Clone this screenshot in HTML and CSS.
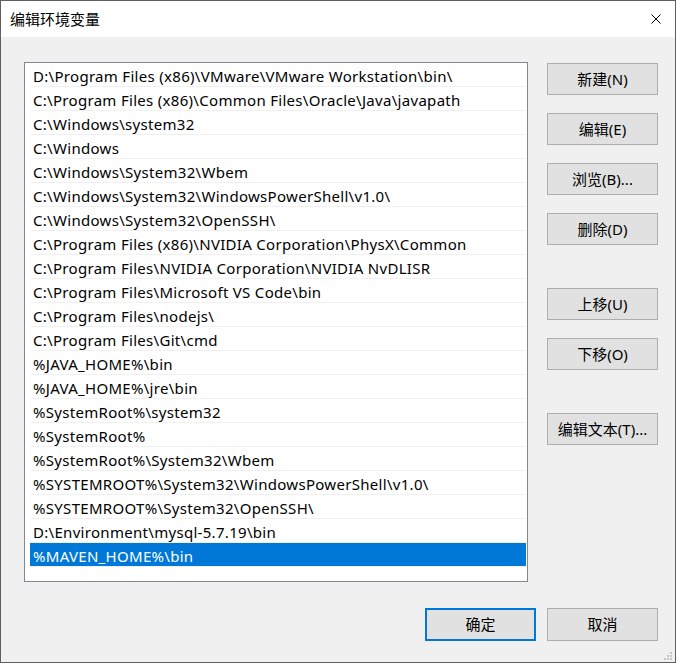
FILE: index.html
```html
<!DOCTYPE html>
<html lang="zh-CN">
<head>
  <meta charset="UTF-8">
  <meta name="viewport" content="width=device-width, initial-scale=1.0">
  <title>编辑环境变量</title>
  <link rel="stylesheet" href="styles.css">
</head>
<body>
  <div class="dialog">
    <div class="titleBar">
      <span class="title">编辑环境变量</span>
      <span class="close">
        <svg width="10" height="10" viewBox="0 0 10 10"><path d="M0.5 0.5 L9.5 9.5 M9.5 0.5 L0.5 9.5" stroke="#000" stroke-width="1" fill="none"/></svg>
      </span>
    </div>
    <div class="content">
      <div class="main">
        <ul class="pathList">
          <li>D:\Program Files (x86)\VMware\VMware Workstation\bin\</li>
          <li>C:\Program Files (x86)\Common Files\Oracle\Java\javapath</li>
          <li>C:\Windows\system32</li>
          <li>C:\Windows</li>
          <li>C:\Windows\System32\Wbem</li>
          <li>C:\Windows\System32\WindowsPowerShell\v1.0\</li>
          <li>C:\Windows\System32\OpenSSH\</li>
          <li>C:\Program Files (x86)\NVIDIA Corporation\PhysX\Common</li>
          <li>C:\Program Files\NVIDIA Corporation\NVIDIA NvDLISR</li>
          <li>C:\Program Files\Microsoft VS Code\bin</li>
          <li>C:\Program Files\nodejs\</li>
          <li>C:\Program Files\Git\cmd</li>
          <li>%JAVA_HOME%\bin</li>
          <li>%JAVA_HOME%\jre\bin</li>
          <li>%SystemRoot%\system32</li>
          <li>%SystemRoot%</li>
          <li>%SystemRoot%\System32\Wbem</li>
          <li>%SYSTEMROOT%\System32\WindowsPowerShell\v1.0\</li>
          <li>%SYSTEMROOT%\System32\OpenSSH\</li>
          <li>D:\Environment\mysql-5.7.19\bin</li>
          <li class="selected">%MAVEN_HOME%\bin</li>
        </ul>
        <div class="sideBtns">
          <div class="group">
            <button class="btn">新建(N)</button>
            <button class="btn">编辑(E)</button>
            <button class="btn">浏览(B)...</button>
            <button class="btn">删除(D)</button>
          </div>
          <div class="group">
            <button class="btn">上移(U)</button>
            <button class="btn">下移(O)</button>
          </div>
          <div class="group">
            <button class="btn">编辑文本(T)...</button>
          </div>
        </div>
      </div>
      <div class="footer">
        <button class="btn btnBottom default">确定</button>
        <button class="btn btnBottom">取消</button>
      </div>
    </div>
    <svg class="grip" width="12" height="12" viewBox="0 0 12 12">
      <rect x="8" y="2" width="2" height="2" fill="#c4c4c4"/>
      <rect x="5" y="5" width="2" height="2" fill="#c4c4c4"/>
      <rect x="8" y="5" width="2" height="2" fill="#c4c4c4"/>
      <rect x="2" y="8" width="2" height="2" fill="#c4c4c4"/>
      <rect x="5" y="8" width="2" height="2" fill="#c4c4c4"/>
      <rect x="8" y="8" width="2" height="2" fill="#c4c4c4"/>
    </svg>
  </div>
</body>
</html>
```

FILE: styles.css
```css
* {margin:0; padding:0; box-sizing:border-box;}
html, body {background:#fff;}
body {font-family:"Noto Sans", "Noto Sans CJK SC", sans-serif; font-size:15px; color:#000;}

.dialog {position:relative; width:676px; height:663px; border:1px solid #5f5f5f; background:#f0f0f0; display:flex; flex-direction:column;}

.titleBar {height:36px; background:#fff; display:flex; align-items:center; justify-content:space-between; padding:0 14px 0 9px;}
.titleBar .title {font-size:15px; line-height:20px;}
.titleBar .close {display:flex; width:10px; height:10px; margin-top:-1px;}

.content {flex:1; padding:25px 17px 0 23px; display:flex; flex-direction:column;}
.main {display:flex; gap:19px;}

.pathList {list-style:none; width:504px; height:520px; background:#fff; border:1px solid #828790; padding:0 1px 0 5px;}
.pathList li {height:24px; line-height:23px; padding:2px 0 0 3px; border-bottom:1px solid #f0f0f0; white-space:nowrap; overflow:hidden; letter-spacing:0.3px;}
.pathList li.selected {background:#0078d7; color:#fff;}

.sideBtns {display:flex; flex-direction:column; gap:43px; padding-top:1px;}
.sideBtns .group {display:flex; flex-direction:column; gap:18px;}

.btn {width:111px; height:32px; padding-bottom:2px; background:#e1e1e1; border:1px solid #adadad; font-family:inherit; font-size:15px; color:#000;}

.footer {display:flex; justify-content:flex-end; gap:11px; margin-top:26px;}
.btnBottom {height:33px;}
.btnBottom.default {border:2px solid #0078d7;}

.grip {position:absolute; right:1px; bottom:0;}
```
